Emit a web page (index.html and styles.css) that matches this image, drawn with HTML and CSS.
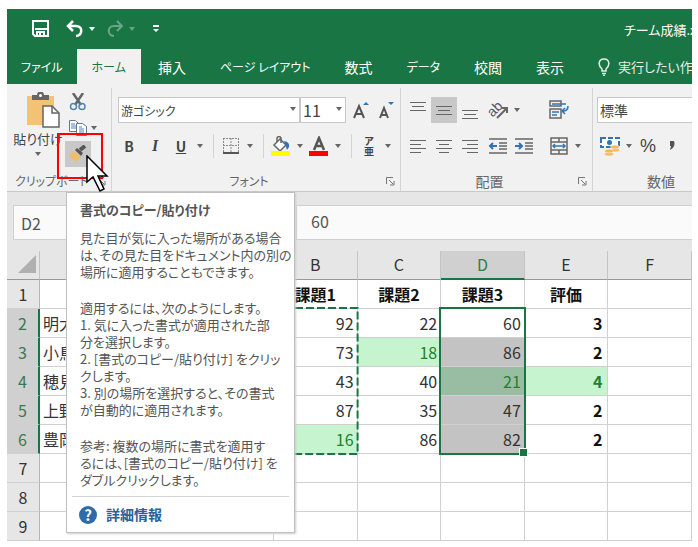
FILE: index.html
```html
<!DOCTYPE html>
<html lang="ja">
<head>
  <meta charset="UTF-8">
  <meta name="viewport" content="width=device-width, initial-scale=1.0">
  <title>チーム成績.xlsx</title>
  <link rel="stylesheet" href="styles.css">
</head>
<body>
  <div class="window">
    <header class="titlebar">
      <div class="quick">
        <button class="save" aria-label="上書き保存"><svg width="18" height="18" viewBox="0 0 18 18" fill="none" stroke="#fff" stroke-width="2"><path d="M1 1h15v15H3l-2-2zM3 9h12M5 16v-4h7v4"/><path d="M8 13v3"/></svg></button>
        <button aria-label="元に戻す"><svg width="18" height="18" viewBox="0 0 18 18" fill="none" stroke="#fff" stroke-width="2.500"><path d="M7 1L2 6l5 5M2 6h8c7 0 7 9 0 10"/></svg></button>
        <i class="caret light"></i>
        <button class="off" aria-label="やり直し"><svg width="18" height="18" viewBox="0 0 18 18" fill="none" stroke="#fff" stroke-width="2"><path d="M11 1l5 5-5 5M16 6H8c-7 0-7 9 0 10"/></svg></button>
        <i class="caret light off"></i>
        <button class="custom" aria-label="カスタマイズ"><svg width="8" height="8" viewBox="0 0 8 8"><path d="M1 0h6v2H1zM1 4h6L4 7z" fill="#fff"/></svg></button>
      </div>
      <div class="filename">チーム成績.xlsx</div>
    </header>

    <nav class="tabs">
      <button class="tab file kana">ファイル</button>
      <button class="tab active kana">ホーム</button>
      <button class="tab">挿入</button>
      <button class="tab kana">ページ レイアウト</button>
      <button class="tab">数式</button>
      <button class="tab kana">データ</button>
      <button class="tab">校閲</button>
      <button class="tab">表示</button>
      <button class="tab tell"><svg width="12" height="18" viewBox="0 0 12 18" fill="none" stroke="#e4efe8" stroke-width="1.5"><path d="M4 13v-2C0 8 0 1 6 1s6 7 2 10v2zM4 15.500h4M5 17.500h2"/></svg>実行したい作業</button>
    </nav>

    <div class="ribbon">
      <section class="group clipboard">
        <div class="tools">
          <button class="paste">
            <svg width="34" height="37" viewBox="0 0 34 37"><path d="M1 4h27v29H1z" fill="#f2c374"/><path d="M6 3h5a3.500 3.500 0 0 1 7 0h5v5H6z" fill="#666"/><circle cx="14.500" cy="3.500" r="1.500" fill="#fff"/><path d="M17 14h9l7 7v14H17z" fill="#fff" stroke="#666" stroke-width="1.500"/><path d="M26 14v7h7" fill="none" stroke="#666" stroke-width="1.500"/></svg>
            <span>貼り付け</span>
            <i class="caret"></i>
          </button>
          <div class="clip-col">
            <button class="clip" aria-label="切り取り"><svg width="18" height="18" viewBox="0 0 18 18" fill="none"><path d="M4 0l8 12M14 0L6 12" stroke="#666" stroke-width="2.500"/><circle cx="4.500" cy="13.500" r="3" stroke="#4e86b8" stroke-width="1.500"/><circle cx="13" cy="13.500" r="3" stroke="#4e86b8" stroke-width="1.500"/></svg></button>
            <button class="clip copy" aria-label="コピー"><svg width="20" height="16" viewBox="0 0 20 16" fill="#fff" stroke="#6b7785"><path d="M1.500.5h6l3 3v8h-9z"/><path d="M3 4h4M3 6h5M3 8h5" stroke="#4e86b8"/><path d="M8.500 3.500h6l4 3v9h-10z"/><path d="M11 7h3M11 9h5M11 11h5M11 13h5" stroke="#4e86b8"/></svg><i class="caret"></i></button>
            <button class="clip brush" aria-label="書式のコピー/貼り付け"><svg width="20" height="18" viewBox="0 0 20 18"><path d="M1 11l5-5 7 6-6 5z" fill="#f0bd6b"/><path d="M7 5l2-2 6 5-2 3z" fill="#555"/><path d="M12 5l5-4" stroke="#555" stroke-width="4"/></svg></button>
          </div>
        </div>
        <footer class="kana"><span>クリップボード</span><svg class="launch" viewBox="0 0 9 9"><path d="M.5 7V.5H7M3 3l4 4M8 4v4H4"/></svg></footer>
      </section>

      <section class="group font">
        <div class="tools stack">
          <div class="line">
            <span class="combo family"><select aria-label="フォント"><option>游ゴシック</option></select></span>
            <span class="combo size"><select aria-label="フォント サイズ"><option>11</option></select></span>
            <button class="tool grow" aria-label="フォント サイズの拡大"><svg width="16" height="18" viewBox="0 0 16 18"><path d="M1 17L6 5l5 12M3 13h6" fill="none" stroke="#555" stroke-width="2"/><path d="M10 4l3-3 3 3z" fill="#2f75b5"/></svg></button>
            <button class="tool" aria-label="フォント サイズの縮小"><svg width="16" height="18" viewBox="0 0 16 18"><path d="M1 17L5 7l4 10M2 14h6" fill="none" stroke="#555" stroke-width="2"/><path d="M9 1h6l-3 3z" fill="#2f75b5"/></svg></button>
          </div>
          <div class="line">
            <button class="tool bold">B</button>
            <button class="tool italic">I</button>
            <button class="tool underline">U</button>
            <i class="caret"></i>
            <i class="sep"></i>
            <button class="tool" aria-label="罫線"><svg width="16" height="16" viewBox="0 0 16 16" fill="none" stroke="#888"><path d="M.5 0v15M15.500 0v15M8 0v15M0 .5h16M0 7.500h16" stroke-dasharray="2 1"/><path d="M0 15h16" stroke="#555" stroke-width="2"/></svg></button>
            <i class="caret"></i>
            <i class="sep"></i>
            <button class="tool" aria-label="塗りつぶしの色"><svg width="20" height="20" viewBox="0 0 20 20"><path d="M3 9l6-6 6 6-6 6z" fill="#fff" stroke="#666" stroke-width="1.500"/><path d="M6 6V2q2-3 4 0v5" fill="none" stroke="#666" stroke-width="1.500"/><path d="M13 5q6 1 5 6l-2 3z" fill="#2f75b5"/><path d="M0 15h19v5H0z" fill="#ff0"/></svg></button>
            <i class="caret"></i>
            <button class="tool" aria-label="フォントの色"><svg width="20" height="20" viewBox="0 0 20 20"><path d="M5 14L10 2l5 12M7 10h6" fill="none" stroke="#555" stroke-width="2.500"/><path d="M0 15h19v5H0z" fill="red"/></svg></button>
            <i class="caret"></i>
            <i class="sep"></i>
            <button class="tool ruby"><span>ア</span><span>亜</span></button>
            <i class="caret"></i>
          </div>
        </div>
        <footer class="kana"><span>フォント</span><svg class="launch" viewBox="0 0 9 9"><path d="M.5 7V.5H7M3 3l4 4M8 4v4H4"/></svg></footer>
      </section>

      <section class="group align">
        <div class="tools">
          <div class="stack">
            <div class="line">
              <button class="tool" aria-label="上揃え"><svg class="bars" viewBox="0 0 18 18"><path d="M1 1.500h16M3 5.500h12M1 9.500h16"/></svg></button>
              <button class="tool pressed" aria-label="上下中央揃え"><svg class="bars" viewBox="0 0 18 18"><path d="M1 5.500h16M3 9.500h12M1 13.500h16"/></svg></button>
              <button class="tool" aria-label="下揃え"><svg class="bars" viewBox="0 0 18 18"><path d="M1 9.500h16M3 13.500h12M1 17.500h16"/></svg></button>
            </div>
            <div class="line">
              <button class="tool" aria-label="左揃え"><svg class="bars" viewBox="0 0 18 18"><path d="M1 3.500h16M1 7.500h11M1 11.500h16M1 15.500h11"/></svg></button>
              <button class="tool" aria-label="中央揃え"><svg class="bars" viewBox="0 0 18 18"><path d="M1 3.500h16M4 7.500h10M1 11.500h16M4 15.500h10"/></svg></button>
              <button class="tool" aria-label="右揃え"><svg class="bars" viewBox="0 0 18 18"><path d="M1 3.500h16M6 7.500h11M1 11.500h16M6 15.500h11"/></svg></button>
            </div>
          </div>
          <div class="stack indent">
            <div class="line">
              <button class="tool orient"><svg width="22" height="22" viewBox="0 0 22 22"><text x="1" y="14" transform="rotate(-45 9 11)">ab</text><path d="M10 19l9-9M15 9h5v5" fill="none" stroke="#666" stroke-width="2"/></svg></button>
              <i class="caret"></i>
            </div>
            <div class="line">
              <button class="tool" aria-label="インデントを減らす"><svg width="20" height="18" viewBox="0 0 20 18" fill="none" stroke="#666" stroke-width="1.500"><path d="M1 2h18M11 6h8M11 9h8M11 12h8M1 16h18"/><path d="M9 9H2M5 6L2 9l3 3" stroke="#2f75b5" stroke-width="2"/></svg></button>
              <button class="tool" aria-label="インデントを増やす"><svg width="20" height="18" viewBox="0 0 20 18" fill="none" stroke="#666" stroke-width="1.500"><path d="M1 2h18M11 6h8M11 9h8M11 12h8M1 16h18"/><path d="M1 9h7M5 6l3 3-3 3" stroke="#2f75b5" stroke-width="2"/></svg></button>
            </div>
          </div>
          <div class="stack merge">
            <div class="line">
              <button class="tool" aria-label="折り返して全体を表示する"><svg width="20" height="20" viewBox="0 0 20 20" fill="none" stroke="#666" stroke-width="1.500"><path d="M1 1h11v5H1zM1 9h11v9H1z"/><path d="M3 4h14M3 12h7M3 15h5" stroke="#2f75b5"/><path d="M19 6q0 5-5 5M16 8l-3 3 3 3" stroke="#2f75b5"/></svg></button>
            </div>
            <div class="line">
              <button class="tool" aria-label="セルを結合して中央揃え"><svg width="18" height="18" viewBox="0 0 18 18" fill="none" stroke="#666" stroke-width="1.500"><path d="M1 1h16v16H1zM1 5h16M1 13h16M9 1v4M9 13v4"/><path d="M3 9h12M5 7L3 9l2 2M13 7l2 2-2 2" stroke="#2f75b5"/></svg></button>
              <i class="caret"></i>
            </div>
          </div>
        </div>
        <footer><span>配置</span><svg class="launch" viewBox="0 0 9 9"><path d="M.5 7V.5H7M3 3l4 4M8 4v4H4"/></svg></footer>
      </section>

      <section class="group number">
        <div class="tools stack">
          <div class="line">
            <span class="combo format"><select aria-label="表示形式"><option>標準</option></select></span>
          </div>
          <div class="line">
            <button class="tool" aria-label="通貨表示形式"><svg width="20" height="20" viewBox="0 0 20 20"><path d="M1 2h18v9H1z" fill="#fff" stroke="#2f75b5" stroke-width="2" stroke-dasharray="5 2"/><circle cx="9.500" cy="6.500" r="2.500" fill="#2f75b5"/><g fill="#f2b95f" stroke="#fff" stroke-width=".5"><ellipse cx="15" cy="14" rx="4.500" ry="2"/><ellipse cx="15" cy="11" rx="4.500" ry="2"/><ellipse cx="9" cy="18" rx="4.500" ry="2"/><ellipse cx="9" cy="15" rx="4.500" ry="2"/></g></svg></button>
            <i class="caret"></i>
            <button class="tool percent">%</button>
            <button class="tool comma" aria-label="桁区切りスタイル"><svg width="6" height="10" viewBox="0 0 6 10"><path d="M1 0h4q2 6-4 9l1-4H1z" fill="#555"/></svg></button>
          </div>
        </div>
        <footer><span>数値</span></footer>
      </section>
    </div>

    <div class="formula-bar">
      <input class="name-box" type="text" value="D2" aria-label="名前ボックス">
      <input class="formula" type="text" value="60" aria-label="数式バー">
    </div>

    <table class="sheet">
      <colgroup><col class="col-num"><col class="col-name"><col><col><col><col><col></colgroup>
      <thead>
        <tr><th class="corner"></th><th>A</th><th>B</th><th>C</th><th class="on">D</th><th>E</th><th>F</th></tr>
      </thead>
      <tbody>
        <tr class="titles"><th>1</th><td></td><td>課題1</td><td>課題2</td><td>課題3</td><td>評価</td><td></td></tr>
        <tr><th class="on">2</th><td class="name">明大</td><td class="anchor">92<svg class="ants"><rect x="1" y="1" width="100%" height="100%"/></svg></td><td>22</td><td class="anchor">60<i class="selection"></i></td><td class="grade">3</td><td></td></tr>
        <tr><th class="on">3</th><td class="name">小鳥</td><td>73</td><td class="good">18</td><td class="picked">86</td><td class="grade">2</td><td></td></tr>
        <tr><th class="on">4</th><td class="name">穂見</td><td>43</td><td>40</td><td class="picked good">21</td><td class="grade good">4</td><td></td></tr>
        <tr><th class="on">5</th><td class="name">上野</td><td>87</td><td>35</td><td class="picked">47</td><td class="grade">2</td><td></td></tr>
        <tr><th class="on">6</th><td class="name">豊岡</td><td class="good">16</td><td>86</td><td class="picked">82</td><td class="grade">2</td><td></td></tr>
        <tr><th>7</th><td></td><td></td><td></td><td></td><td></td><td></td></tr>
        <tr><th>8</th><td></td><td></td><td></td><td></td><td></td><td></td></tr>
        <tr><th>9</th><td></td><td></td><td></td><td></td><td></td><td></td></tr>
      </tbody>
    </table>

    <div class="tooltip" role="tooltip">
      <h2>書式のコピー/貼り付け</h2>
      <p>見た目が気に入った場所がある場合<br>は、その見た目をドキュメント内の別の<br>場所に適用することもできます。</p>
      <p>適用するには、次のようにします。<br>1. 気に入った書式が適用された部<br>分を選択します。<br>2. [書式のコピー/貼り付け] をクリッ<br>クします。<br>3. 別の場所を選択すると、その書式<br>が自動的に適用されます。</p>
      <p>参考: 複数の場所に書式を適用す<br>るには、[書式のコピー/貼り付け] を<br>ダブルクリックします。</p>
      <a class="more" href="#"><span class="help">?</span>詳細情報</a>
    </div>

    <div class="highlight"></div>
    <svg class="pointer" width="24" height="38" viewBox="0 0 24 38"><path d="M1 1v26l6-5 7 14 4-2-6-13h9z" fill="#fff" stroke="#000" stroke-width="1.500"/></svg>
  </div>
</body>
</html>
```

FILE: styles.css
```css
* {
  box-sizing: border-box;
}
body {
  margin: 0;
  padding: 9px 6px 6px 7px;
  background: #fff;
  color: #444;
  font-family: "Noto Sans CJK JP", sans-serif;
  font-size: 14px;
  font-feature-settings: "palt";
}
button {
  display: flex;
  align-items: center;
  justify-content: center;
  padding: 0;
  border: none;
  background: none;
  color: inherit;
  font: inherit;
  font-feature-settings: inherit;
  white-space: nowrap;
}
svg {
  flex: none;
}
.window {
  position: relative;
  overflow: hidden;
}

/* title bar and tabs */
.titlebar {
  display: flex;
  align-items: center;
  justify-content: space-between;
  height: 40px;
  background: #1a7544;
  color: #fff;
}
.quick {
  display: flex;
  align-items: center;
  padding-left: 25px;
}
.save {
  margin-right: 16px;
}
.quick .caret {
  margin: 0 8px 0 2px;
}
.off {
  opacity: 0.35;
}
.custom {
  margin-left: 6px;
}
.filename {
  width: 68px;
  overflow: hidden;
  font-size: 13px;
  white-space: nowrap;
}
.tabs {
  display: flex;
  height: 35px;
  background: #1a7544;
  color: #fff;
}
.tab {
  flex: none;
  padding: 0 17px;
}
.tab.kana,
.kana {
  font-size: 12px;
}
.tab.file {
  padding: 0 14px;
}
.tab.active {
  padding: 0 15px;
  background: #f1f1f1;
  color: #1a7544;
}
.tab.tell {
  gap: 8px;
  color: #e4efe8;
  font-size: 13px;
}

/* ribbon */
.ribbon {
  display: flex;
  height: 108px;
  background: #f1f1f1;
  border-bottom: 1px solid #c8c8c8;
}
.group {
  display: flex;
  flex: none;
  flex-direction: column;
  justify-content: space-between;
  margin: 4px 0 0;
  border-right: 1px solid #d4d4d4;
}
.clipboard {
  width: 105px;
}
.font {
  width: 289px;
}
.align {
  width: 192px;
}
.number {
  width: 142px;
}
.group footer {
  display: flex;
  align-items: center;
  height: 20px;
  padding-right: 5px;
  color: #666;
  line-height: 20px;
}
.group footer span {
  flex: 1;
  text-align: center;
  white-space: nowrap;
}
.launch {
  width: 9px;
  height: 9px;
  fill: none;
  stroke: #777;
}
.tools {
  display: flex;
  padding-left: 4px;
}
.stack {
  display: flex;
  flex-direction: column;
  gap: 10px;
  padding-top: 9px;
}
.line {
  display: flex;
  align-items: center;
  height: 26px;
}
.caret {
  flex: none;
  display: flex;
  justify-content: center;
  width: 12px;
}
.caret::before {
  content: "";
  border: 3px solid transparent;
  border-top: 4px solid #666;
  border-bottom: none;
}
.caret.light::before {
  border-top-color: #fff;
}
.sep {
  width: 1px;
  height: 24px;
  margin: 0 4px 0 7px;
  background: #d4d4d4;
}
.tool {
  flex: none;
  width: 26px;
  height: 26px;
}
.pressed {
  background: #c8c8c8;
}
.paste {
  flex-direction: column;
  justify-content: flex-start;
  width: 54px;
  padding-top: 4px;
  font-size: 13px;
  line-height: 20px;
}
.paste svg {
  margin-left: 10px;
}
.paste span {
  margin-bottom: 3px;
}
.clip-col {
  display: flex;
  flex-direction: column;
  align-items: flex-start;
  padding-top: 1px;
}
.clip {
  width: 26px;
  height: 26px;
}
.copy {
  width: 38px;
}
.brush {
  background: #c8c8c8;
}
.combo {
  position: relative;
}
.combo::after {
  content: "";
  position: absolute;
  top: 10px;
  right: 4px;
  border: 3px solid transparent;
  border-top: 4px solid #666;
  border-bottom: none;
  pointer-events: none;
}
.combo select {
  display: block;
  appearance: none;
  width: 100%;
  height: 26px;
  padding: 0 2px;
  border: 1px solid #c8c8c8;
  border-radius: 0;
  background: #fff;
  color: #444;
  font: inherit;
  font-feature-settings: inherit;
}
.family {
  width: 182px;
  margin-left: 2px;
}
.family select {
  font-size: 12px;
}
.size {
  width: 46px;
}
.size select {
  font-size: 16px;
}
.grow {
  margin-left: 2px;
}
.format {
  width: 132px;
}
.bold {
  font-weight: bold;
}
.italic {
  font-family: "Liberation Serif", serif;
  font-size: 16px;
  font-style: italic;
  font-weight: bold;
}
.underline {
  font-weight: bold;
  text-decoration: underline;
}
.ruby {
  flex-direction: column;
  font-size: 10px;
  font-weight: bold;
  line-height: 10px;
}
.bars {
  width: 18px;
  height: 18px;
  stroke: #666;
}
.indent {
  margin-left: 2px;
}
.merge {
  margin-left: 9px;
}
.orient text {
  fill: #555;
  font-family: "Liberation Sans", sans-serif;
  font-size: 14px;
}
.percent {
  font-family: "Liberation Sans", sans-serif;
  font-size: 18px;
}
.percent + .comma {
  margin-left: -2px;
}

/* formula bar */
.formula-bar {
  display: flex;
  justify-content: space-between;
  padding: 13px 0 11px 6px;
  background: #e6e6e6;
}
.formula-bar input {
  height: 35px;
  border: 1px solid #d0d0d0;
  border-right: none;
  background: #fafafa;
  color: #555;
  font: inherit;
  font-size: 16px;
}
.name-box {
  width: 120px;
  padding: 0 7px;
}
.formula {
  flex: 1;
  min-width: 0;
  margin-left: 163px;
  padding: 0 14px 4px;
}

/* sheet */
.sheet {
  width: 100%;
  table-layout: fixed;
  border-collapse: separate;
  border-spacing: 0;
  color: #333;
  font-size: 16px;
  line-height: 26px;
}
.col-num {
  width: 33px;
}
.col-name {
  width: 234px;
}
.sheet th,
.sheet td {
  height: 29px;
  padding: 0 3px;
  border-right: 1px solid #d0d0d0;
  border-bottom: 1px solid #d0d0d0;
  white-space: nowrap;
}
.sheet td {
  text-align: right;
}
.sheet th {
  background: #e6e6e6;
  border-right-color: #b4b4b4;
  font-weight: normal;
}
.sheet thead th {
  padding-bottom: 2px;
  border-right-color: #c4c4c4;
  border-bottom-color: #999;
}
.sheet th.on {
  background: #d0d0d0;
  border-right: 2px solid #1a7544;
  color: #39794f;
}
.sheet thead th.on {
  padding-bottom: 1px;
  border-right: 1px solid #c4c4c4;
  border-bottom: 2px solid #1a7544;
}
.sheet .corner::before {
  content: "";
  display: block;
  float: right;
  border-bottom: 18px solid #b0b0b0;
  border-left: 18px solid transparent;
}
.sheet .titles td {
  color: #111;
  font-weight: bold;
  text-align: center;
}
.sheet .name {
  text-align: left;
}
.sheet .grade {
  padding-right: 5px;
  color: #111;
  font-weight: bold;
}
.sheet .good {
  background: #c5f4cf;
  color: #24802e;
}
.sheet .picked {
  background: #c3c3c3;
}
.sheet .picked.good {
  background: #98bda3;
}
.anchor {
  position: relative;
}
/* both frames span the five data rows */
.selection,
.ants {
  position: absolute;
  top: -2px;
  left: -2px;
  width: calc(100% + 4px);
  height: 148px;
}
.selection {
  border: 2px solid #1a7544;
}
.selection::after {
  content: "";
  position: absolute;
  right: -4px;
  bottom: -4px;
  width: 7px;
  height: 7px;
  border: 1px solid #fff;
  background: #1a7544;
}
.ants {
  padding: 0 2px 2px 0;
  overflow: visible;
  fill: none;
  stroke: #1a7544;
  stroke-width: 2;
  stroke-dasharray: 8 3;
}

/* tooltip */
.tooltip {
  position: absolute;
  top: 183px;
  left: 59px;
  width: 229px;
  padding: 8px 5px 0;
  border: 1px solid #c0c0c0;
  background: #fff;
  box-shadow: 1px 1px 2px #ccc;
  color: #555;
  font-size: 13px;
  line-height: 17px;
  white-space: nowrap;
}
.tooltip h2 {
  margin: 0 8px 11px;
  font-size: 13px;
}
.tooltip p {
  margin: 0 8px 19px;
}
.tooltip p:nth-of-type(3) {
  margin-bottom: 8px;
}
.more {
  display: flex;
  align-items: center;
  gap: 9px;
  height: 36px;
  padding-left: 7px;
  border-top: 1px solid #d4d4d4;
  color: #2a6099;
  font-size: 14px;
  font-weight: bold;
  text-decoration: none;
}
.help {
  width: 18px;
  height: 18px;
  border-radius: 50%;
  background: #2f6ba8;
  color: #fff;
  font-size: 15px;
  line-height: 18px;
  text-align: center;
}
.highlight {
  position: absolute;
  top: 124px;
  left: 50px;
  width: 46px;
  height: 46px;
  border: 2px solid red;
}
.pointer {
  position: absolute;
  top: 146px;
  left: 79px;
}
```
